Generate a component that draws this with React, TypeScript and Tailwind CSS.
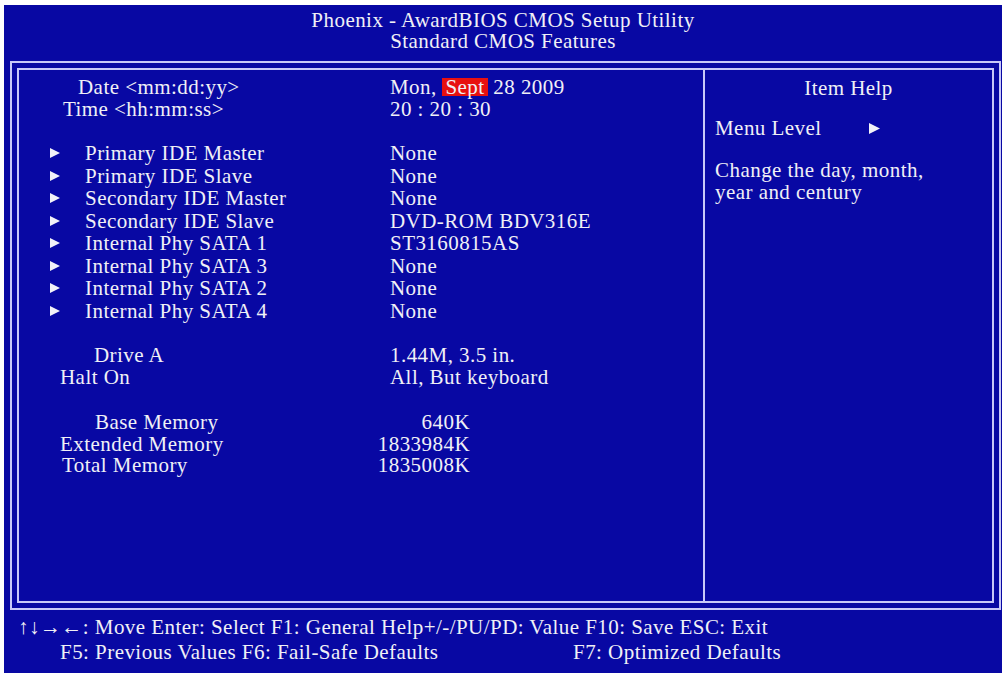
import React from "react";

const Tri = ({ w = 9, h = 10 }: { w?: number; h?: number }) => (
  <svg width={w} height={h} viewBox={`0 0 ${w} ${h}`} className="block">
    <polygon points={`0,0 ${w},${h / 2} 0,${h}`} fill="#f2f2f8" />
  </svg>
);

const ideRows: [string, string][] = [
  ["Primary IDE Master", "None"],
  ["Primary IDE Slave", "None"],
  ["Secondary IDE Master", "None"],
  ["Secondary IDE Slave", "DVD-ROM BDV316E"],
  ["Internal Phy SATA 1", "ST3160815AS"],
  ["Internal Phy SATA 3", "None"],
  ["Internal Phy SATA 2", "None"],
  ["Internal Phy SATA 4", "None"],
];

export default function App() {
  return (
    <div className="w-[1004px] h-[673px] bg-white pt-[5px] pl-[4px] pr-[2px] font-['Liberation_Serif','Times_New_Roman',serif] text-[21px] tracking-[0.45px] text-[#f0f0f6] whitespace-nowrap">
      <div className="h-full bg-[#0808a3] flex flex-col">
        <header className="h-[56px] flex flex-col items-center pt-[5px] leading-[21px]">
          <div>Phoenix - AwardBIOS CMOS Setup Utility</div>
          <div>Standard CMOS Features</div>
        </header>

        <div className="ml-[6px] mr-[1px] h-[549px] border-2 border-[#c8c8f8] p-[5px] flex">
          <div className="flex-1 border-2 border-[#c8c8f8] flex">
            {/* Left panel */}
            <div className="w-[686px] border-r-2 border-[#c8c8f8] pt-[7px]">
              <div className="leading-[21.5px]">
                <div className="flex">
                  <div className="w-[371px] pl-[59px]">Date &lt;mm:dd:yy&gt;</div>
                  <div>
                    Mon,{" "}
                    <span className="inline-block bg-[#e81010] px-[3px] leading-[18px]">Sept</span> 28 2009
                  </div>
                </div>
                <div className="flex">
                  <div className="w-[371px] pl-[44px]">Time &lt;hh:mm:ss&gt;</div>
                  <div>20 : 20 : 30</div>
                </div>
              </div>

              <div className="mt-[22px] leading-[22.5px]">
                {ideRows.map(([label, value]) => (
                  <div key={label} className="flex items-center">
                    <div className="w-[371px] pl-[31px] flex items-center">
                      <Tri w={10} h={10} />
                      <span className="ml-[25px]">{label}</span>
                    </div>
                    <div>{value}</div>
                  </div>
                ))}
              </div>

              <div className="mt-[22px] leading-[22px]">
                <div className="flex">
                  <div className="w-[371px] pl-[75px]">Drive A</div>
                  <div>1.44M, 3.5 in.</div>
                </div>
                <div className="flex">
                  <div className="w-[371px] pl-[41px]">Halt On</div>
                  <div>All, But keyboard</div>
                </div>
              </div>

              <div className="mt-[24px] leading-[21.5px]">
                <div className="flex">
                  <div className="w-[351px] pl-[76px]">Base Memory</div>
                  <div className="w-[100px] text-right">640K</div>
                </div>
                <div className="flex">
                  <div className="w-[351px] pl-[41px]">Extended Memory</div>
                  <div className="w-[100px] text-right">1833984K</div>
                </div>
                <div className="flex">
                  <div className="w-[351px] pl-[43px]">Total Memory</div>
                  <div className="w-[100px] text-right">1835008K</div>
                </div>
              </div>
            </div>

            {/* Right panel */}
            <div className="flex-1 pt-[8px] pl-[10px]">
              <div className="leading-[20px] text-center pr-[10px]">Item Help</div>
              <div className="mt-[20px] leading-[20px] flex items-center">
                <span className="w-[154px]">Menu Level</span>
                <Tri w={11} h={11} />
              </div>
              <div className="mt-[22px] leading-[21.5px]">
                <div>Change the day, month,</div>
                <div>year and century</div>
              </div>
            </div>
          </div>
        </div>

        <footer className="pt-[5px] leading-[25px]">
          <div className="pl-[14px]">↑↓→←: Move Enter: Select F1: General Help+/-/PU/PD: Value F10: Save ESC: Exit</div>
          <div className="pl-[56px] flex">
            <span className="w-[513px]">F5: Previous Values F6: Fail-Safe Defaults</span>
            <span>F7: Optimized Defaults</span>
          </div>
        </footer>
      </div>
    </div>
  );
}
